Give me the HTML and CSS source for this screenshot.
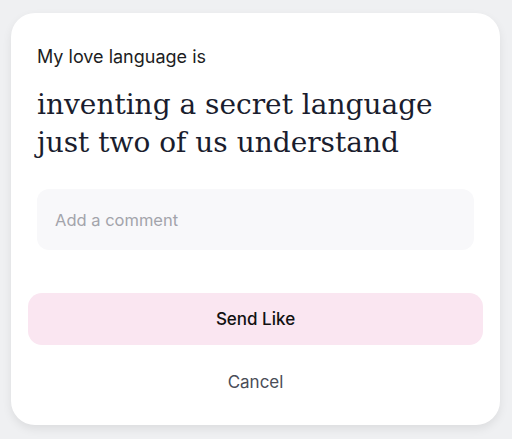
FILE: index.html
```html
<!DOCTYPE html>
<html>
<head>
<meta charset="utf-8">
<link rel="stylesheet" href="styles.css">
</head>
<body>
<div class="card">
  <div class="label">My love language is</div>
  <h1 class="answer">inventing a secret language just two of us understand</h1>
  <div class="comment">Add a comment</div>
  <div class="actions">
    <button class="send">Send Like</button>
    <button class="cancel">Cancel</button>
  </div>
</div>
</body>
</html>
```
FILE: styles.css
```css
html, body {
  margin: 0;
  padding: 0;
}
body {
  background: #eff0f2;
  width: 512px;
  height: 439px;
  overflow: hidden;
  font-family: Inter, "Liberation Sans", sans-serif;
}
.card {
  margin: 13px 12px 0 11px;
  height: 412px;
  box-sizing: border-box;
  background: #ffffff;
  border-radius: 24px;
  box-shadow: 0 4px 10px rgba(0, 0, 0, 0.08);
  padding: 31px 26px 0 26px;
  display: flex;
  flex-direction: column;
}
.label {
  font-size: 18px;
  line-height: 26px;
  color: #1c1d22;
}
.answer {
  margin: 16px 0 0 0;
  font-family: "DejaVu Serif", serif;
  font-weight: 400;
  font-size: 28px;
  line-height: 38px;
  color: #1a1d2e;
}
.comment {
  margin-top: 27px;
  height: 61px;
  box-sizing: border-box;
  background: #f8f8fa;
  border-radius: 12px;
  padding: 0 18px;
  display: flex;
  align-items: center;
  font-size: 16.5px;
  color: #a3a4ab;
}
.actions {
  margin: 43px -9px 0 -9px;
  display: flex;
  flex-direction: column;
}
.send {
  height: 52px;
  border: none;
  border-radius: 14px;
  background: #fae6f1;
  font-family: Inter, "Liberation Sans", sans-serif;
  font-size: 17px;
  font-weight: 500;
  color: #111111;
  padding: 0;
}
.cancel {
  margin-top: 11px;
  height: 52px;
  border: none;
  background: transparent;
  font-family: Inter, "Liberation Sans", sans-serif;
  font-size: 17px;
  font-weight: 400;
  color: #4a4d57;
  padding: 0;
}
```
